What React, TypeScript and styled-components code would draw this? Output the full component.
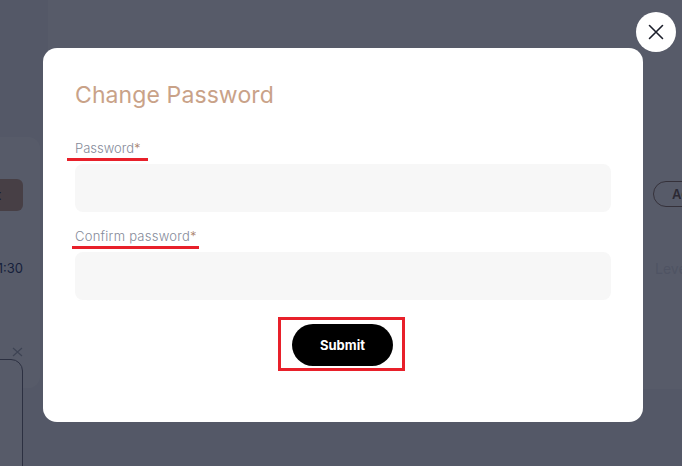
import styled, { createGlobalStyle } from "styled-components";

const GlobalStyle = createGlobalStyle`
  html, body {
    margin: 0;
    padding: 0;
  }
  body {
    font-family: Inter, "Noto Sans", sans-serif;
    background: #f5f6f7;
    overflow: hidden;
  }
  * { box-sizing: border-box; }
`;

const brand = "#c9a288";
const mark = "#e8202a";

export default function App() {
  return (
    <>
      <GlobalStyle />
      <Page>
        <SideCard>
          <EndRow>
            <EditButton>Edit</EditButton>
          </EndRow>
          <EndRow>
            <Time>11:30</Time>
          </EndRow>
        </SideCard>
        <MainCard>
          <RightCol>
            <AddPill>Add</AddPill>
            <Level>Level</Level>
          </RightCol>
        </MainCard>
        <Popup>
          <PopupClose>
            <svg width="11" height="10" viewBox="0 0 11 10">
              <path d="M1 1 L10 9 M10 1 L1 9" stroke="currentColor" strokeWidth="1.3" />
            </svg>
          </PopupClose>
          <PopupBox />
        </Popup>
      </Page>

      <Overlay>
        <Modal>
          <CloseButton aria-label="Close">
            <svg width="16" height="16" viewBox="0 0 16 16">
              <path d="M1.5 1.5 L14.5 14.5 M14.5 1.5 L1.5 14.5" stroke="#1c1f2b" strokeWidth="1.6" strokeLinecap="round" />
            </svg>
          </CloseButton>
          <Title>Change Password</Title>
          <Field>
            <LabelMark $lead={8} $tail={7}>
              <Label>Password<Req>*</Req></Label>
            </LabelMark>
            <Input type="password" />
          </Field>
          <Field>
            <LabelMark $lead={3} $tail={2}>
              <Label $spacing={0.25}>Confirm password<Req>*</Req></Label>
            </LabelMark>
            <Input type="password" />
          </Field>
          <Actions>
            <Highlight>
              <SubmitButton>Submit</SubmitButton>
            </Highlight>
          </Actions>
        </Modal>
      </Overlay>
    </>
  );
}

/* page underneath the dialog */

const Page = styled.div`
  position: relative;
  width: 682px;
  height: 466px;
  overflow: hidden;
  display: grid;
  grid-template-columns: 40px 1fr;
  column-gap: 8px;
  padding-bottom: 77px;
  background: #f5f6f7;
`;

const SideCard = styled.div`
  margin-top: 137px;
  margin-bottom: 1px;
  background: #fff;
  border-radius: 0 12px 12px 0;
  padding-top: 42px;
  display: flex;
  flex-direction: column;
  gap: 49px;
`;

const EndRow = styled.div`
  display: flex;
  justify-content: flex-end;
  padding-right: 17px;
`;

const EditButton = styled.div`
  flex: none;
  width: 90px;
  height: 32px;
  border-radius: 6px;
  background: ${brand};
  color: #2a2a30;
  font-size: 13px;
  font-weight: 600;
  display: flex;
  align-items: center;
  justify-content: flex-end;
  padding-right: 22px;
`;

const Time = styled.div`
  flex: none;
  font-size: 13px;
  line-height: 16px;
  color: #2b3a67;
  white-space: nowrap;
`;

const MainCard = styled.div`
  background: #fff;
  border-radius: 0 0 0 12px;
  padding-top: 181px;
  display: flex;
  justify-content: flex-end;
`;

const RightCol = styled.div`
  flex: none;
  width: 60px;
  margin-right: -31px;
  display: flex;
  flex-direction: column;
  align-items: flex-start;
  gap: 54px;
`;

const AddPill = styled.div`
  height: 26px;
  width: 60px;
  border: 1px solid #8d7262;
  border-radius: 13px;
  padding-left: 18px;
  font-size: 13px;
  font-weight: 600;
  color: #6f5a4e;
  display: flex;
  align-items: center;
`;

const Level = styled.div`
  margin-left: 2px;
  font-size: 14px;
  line-height: 16px;
  color: #e3e5ea;
`;

const Popup = styled.div`
  position: absolute;
  left: -100px;
  top: 347px;
  width: 123px;
  display: flex;
  flex-direction: column;
  align-items: flex-end;
`;

const PopupClose = styled.div`
  color: #a9adb6;
  display: flex;
  height: 12px;
`;

const PopupBox = styled.div`
  width: 123px;
  height: 200px;
  background: #fff;
  border: 1px solid #6e6e78;
  border-radius: 12px;
`;

/* dialog */

const Overlay = styled.div`
  position: fixed;
  inset: 0;
  background: rgba(15, 22, 41, 0.7);
  display: flex;
  align-items: center;
  justify-content: center;
  padding: 4px 0 0 4px;
`;

const Modal = styled.div`
  position: relative;
  width: 600px;
  height: 374px;
  background: #fff;
  border-radius: 14px;
  padding: 33px 32px 51px;
  display: flex;
  flex-direction: column;
`;

const CloseButton = styled.button`
  position: absolute;
  top: -36px;
  right: -33px;
  width: 40px;
  height: 40px;
  border: none;
  border-radius: 50%;
  background: #fff;
  padding: 0;
  display: flex;
  align-items: center;
  justify-content: center;
  cursor: pointer;
`;

const Title = styled.h2`
  margin: 0 0 31px;
  font-size: 23px;
  line-height: 28px;
  font-weight: 400;
  letter-spacing: 0.1px;
  color: ${brand};
`;

const Field = styled.div`
  display: flex;
  flex-direction: column;
  align-items: flex-start;
  & + & {
    margin-top: 16px;
  }
`;

const LabelMark = styled.div<{ $lead: number; $tail: number }>`
  display: inline-block;
  margin-left: ${p => -p.$lead}px;
  padding: 0 ${p => p.$tail}px 2px ${p => p.$lead}px;
  border-bottom: 3px solid ${mark};
`;

const Label = styled.label<{ $spacing?: number }>`
  display: block;
  font-size: 13px;
  line-height: 16px;
  font-weight: 300;
  letter-spacing: ${p => p.$spacing ?? 0}px;
  color: #858a99;
`;

const Req = styled.span`
  color: #a9806a;
`;

const Input = styled.input`
  align-self: stretch;
  margin-top: 3px;
  height: 48px;
  border: none;
  border-radius: 8px;
  background: #f7f7f7;
  padding: 0 16px;
  font: inherit;
  outline: none;
`;

const Actions = styled.div`
  margin-top: 17px;
  display: flex;
  justify-content: center;
`;

const Highlight = styled.div`
  display: inline-flex;
  border: 3px solid ${mark};
  padding: 4px 9px 2px 11px;
  margin-left: -3px;
`;

const SubmitButton = styled.button`
  width: 101px;
  height: 42px;
  border: none;
  border-radius: 21px;
  background: #000;
  color: #fff;
  font-family: Inter, "Noto Sans", sans-serif;
  font-size: 13px;
  font-weight: 700;
  cursor: pointer;
`;
